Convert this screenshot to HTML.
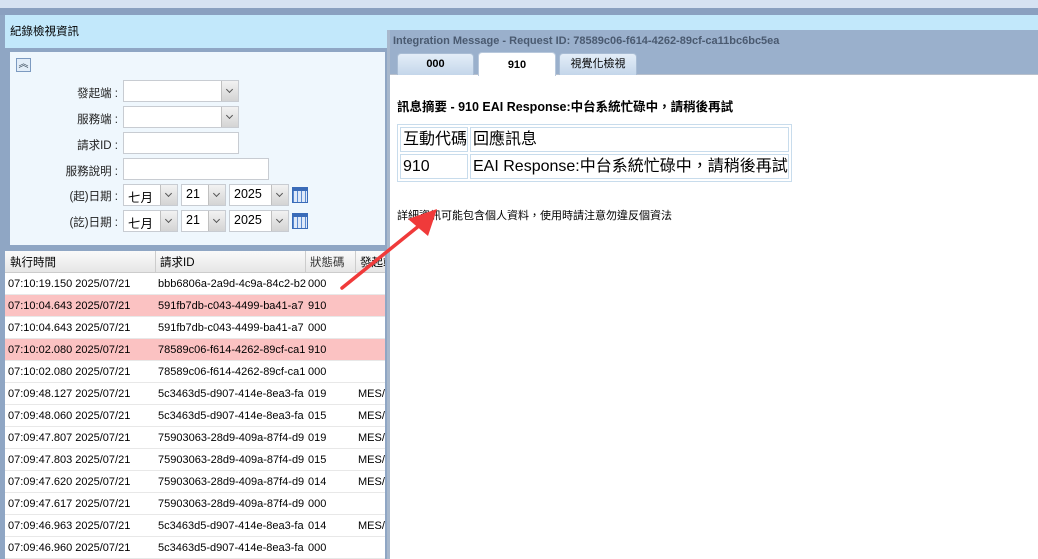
<!DOCTYPE html>
<html><head><meta charset="utf-8"><style>
*{margin:0;padding:0;box-sizing:border-box}
body{width:1038px;height:559px;overflow:hidden;position:relative;background:#8fa6c4;font-family:"Liberation Sans","Noto Sans CJK TC",sans-serif;font-size:12px;color:#000}
.a{position:absolute}
.lbl{position:absolute;text-align:right;width:110px;left:8px;font-size:11.5px;color:#222}
.inp{position:absolute;background:#fff;border:1px solid #c8ccd2;height:22px}
.sel .btn{position:absolute;right:0;top:0;width:17px;height:20px;background:linear-gradient(#f2f2f2,#d4d4d4);border-left:1px solid #c0c0c0}
.sel .btn:after{content:"";position:absolute;left:5px;top:6px;width:4px;height:4px;border-right:1.5px solid #555;border-bottom:1.5px solid #555;transform:rotate(45deg)}
.sel span{position:absolute;left:4px;top:2px;font-size:12.5px}
.cal{position:absolute;width:16px;height:16px;background:repeating-linear-gradient(90deg,#5a8ad0 0 1px,#dfe9f8 1px 4px),#dfe9f8;border:1px solid #3a6bb8;border-top:4px solid #3a6bb8}
.row{position:absolute;left:5px;width:380px;height:22px;border-bottom:1px solid #e8e8e8;background:#fff;font-size:11px}
.row.r{background:#fbc2c2}
.row div{position:absolute;top:5px;overflow:hidden;white-space:nowrap}
.row div:nth-child(2){width:148px}
.row div:nth-child(4){width:30px}
</style></head><body>
<div class="a" style="left:0;top:0;width:1038px;height:8px;background:#d6e2f2"></div>
<div class="a" style="left:0;top:8px;width:1038px;height:7px;background:#8aa0c0"></div>
<div class="a" style="left:5px;top:15px;width:1033px;height:33px;background:#c2e8fb"></div>
<div class="a" style="left:10px;top:23px;font-size:11.5px">紀錄檢視資訊</div>
<div class="a" style="left:10px;top:52px;width:375px;height:193px;background:#eff7fd"></div>
<div class="a" style="left:16px;top:58px;width:15px;height:14px;border:1px solid #7c9ac0;background:#e2edf8;font-size:10px;line-height:11px;text-align:center;color:#345">︽</div>
<div class="lbl" style="top:85px">發起端 :</div>
<div class="inp sel" style="left:123px;top:80px;width:116px"><div class="btn"></div></div>
<div class="lbl" style="top:111px">服務端 :</div>
<div class="inp sel" style="left:123px;top:106px;width:116px"><div class="btn"></div></div>
<div class="lbl" style="top:137px">請求ID :</div>
<div class="inp" style="left:123px;top:132px;width:116px"></div>
<div class="lbl" style="top:163px">服務說明 :</div>
<div class="inp" style="left:123px;top:158px;width:146px"></div>
<div class="lbl" style="top:188px">(起)日期 :</div>
<div class="inp sel" style="left:123px;top:184px;width:55px"><span>七月</span><div class="btn"></div></div>
<div class="inp sel" style="left:181px;top:184px;width:45px"><span>21</span><div class="btn"></div></div>
<div class="inp sel" style="left:229px;top:184px;width:60px"><span>2025</span><div class="btn"></div></div>
<div class="cal" style="left:292px;top:187px"></div>
<div class="lbl" style="top:214px">(訖)日期 :</div>
<div class="inp sel" style="left:123px;top:210px;width:55px"><span>七月</span><div class="btn"></div></div>
<div class="inp sel" style="left:181px;top:210px;width:45px"><span>21</span><div class="btn"></div></div>
<div class="inp sel" style="left:229px;top:210px;width:60px"><span>2025</span><div class="btn"></div></div>
<div class="cal" style="left:292px;top:213px"></div>
<div class="a" style="left:5px;top:251px;width:380px;height:22px;background:linear-gradient(#fafafa,#e6e6e6);border-bottom:1px solid #ccc"></div>
<div class="a" style="left:155px;top:251px;width:1px;height:22px;background:#ccc"></div>
<div class="a" style="left:305px;top:251px;width:1px;height:22px;background:#ccc"></div>
<div class="a" style="left:355px;top:251px;width:1px;height:22px;background:#ccc"></div>
<div class="a" style="left:10px;top:254px;font-size:11.5px">執行時間</div>
<div class="a" style="left:160px;top:254px;font-size:11.5px">請求ID</div>
<div class="a" style="left:310px;top:254px;color:#333;font-size:11.5px">狀態碼</div>
<div class="a" style="left:360px;top:254px;width:25px;overflow:hidden;white-space:nowrap;font-size:11.5px">發起端</div>
<div class="row" style="top:273px"><div style="left:3px">07:10:19.150 2025/07/21</div><div style="left:153px">bbb6806a-2a9d-4c9a-84c2-b2</div><div style="left:303px">000</div></div>
<div class="row r" style="top:295px"><div style="left:3px">07:10:04.643 2025/07/21</div><div style="left:153px">591fb7db-c043-4499-ba41-a7</div><div style="left:303px">910</div></div>
<div class="row" style="top:317px"><div style="left:3px">07:10:04.643 2025/07/21</div><div style="left:153px">591fb7db-c043-4499-ba41-a7</div><div style="left:303px">000</div></div>
<div class="row r" style="top:339px"><div style="left:3px">07:10:02.080 2025/07/21</div><div style="left:153px">78589c06-f614-4262-89cf-ca1</div><div style="left:303px">910</div></div>
<div class="row" style="top:361px"><div style="left:3px">07:10:02.080 2025/07/21</div><div style="left:153px">78589c06-f614-4262-89cf-ca1</div><div style="left:303px">000</div></div>
<div class="row" style="top:383px"><div style="left:3px">07:09:48.127 2025/07/21</div><div style="left:153px">5c3463d5-d907-414e-8ea3-fa</div><div style="left:303px">019</div><div style="left:353px">MES/</div></div>
<div class="row" style="top:405px"><div style="left:3px">07:09:48.060 2025/07/21</div><div style="left:153px">5c3463d5-d907-414e-8ea3-fa</div><div style="left:303px">015</div><div style="left:353px">MES/</div></div>
<div class="row" style="top:427px"><div style="left:3px">07:09:47.807 2025/07/21</div><div style="left:153px">75903063-28d9-409a-87f4-d9</div><div style="left:303px">019</div><div style="left:353px">MES/</div></div>
<div class="row" style="top:449px"><div style="left:3px">07:09:47.803 2025/07/21</div><div style="left:153px">75903063-28d9-409a-87f4-d9</div><div style="left:303px">015</div><div style="left:353px">MES/</div></div>
<div class="row" style="top:471px"><div style="left:3px">07:09:47.620 2025/07/21</div><div style="left:153px">75903063-28d9-409a-87f4-d9</div><div style="left:303px">014</div><div style="left:353px">MES/</div></div>
<div class="row" style="top:493px"><div style="left:3px">07:09:47.617 2025/07/21</div><div style="left:153px">75903063-28d9-409a-87f4-d9</div><div style="left:303px">000</div></div>
<div class="row" style="top:515px"><div style="left:3px">07:09:46.963 2025/07/21</div><div style="left:153px">5c3463d5-d907-414e-8ea3-fa</div><div style="left:303px">014</div><div style="left:353px">MES/</div></div>
<div class="row" style="top:537px"><div style="left:3px">07:09:46.960 2025/07/21</div><div style="left:153px">5c3463d5-d907-414e-8ea3-fa</div><div style="left:303px">000</div></div>
<!-- window -->
<div class="a" style="left:387px;top:30px;width:651px;height:529px;background:#fff;border-left:3px solid #a8b8cc"></div>
<div class="a" style="left:390px;top:30px;width:648px;height:45px;background:#9ab0cc;border-bottom:1px solid #b8c0cc"></div>
<div class="a" style="left:393px;top:35px;font-size:11px;font-weight:bold;color:#4a5a70">Integration Message - Request ID: 78589c06-f614-4262-89cf-ca11bc6bc5ea</div>
<div class="a" style="left:397px;top:53px;width:77px;height:22px;background:linear-gradient(#e4eef8,#c4d6ea);border:1px solid #a8bcd4;border-bottom:none;border-radius:4px 4px 0 0;text-align:center;line-height:21px;font-weight:bold;font-size:11px">000</div>
<div class="a" style="left:478px;top:52px;width:78px;height:24px;background:#fff;border:1px solid #b8c8dc;border-bottom:none;border-radius:4px 4px 0 0;text-align:center;line-height:24px;font-weight:bold;font-size:11px">910</div>
<div class="a" style="left:559px;top:53px;width:78px;height:22px;background:linear-gradient(#e4eef8,#c4d6ea);border:1px solid #a8bcd4;border-bottom:none;border-radius:4px 4px 0 0;text-align:center;line-height:21px;font-size:11px">視覺化檢視</div>
<div class="a" style="left:397px;top:96px;font-weight:bold;font-size:12.5px;white-space:nowrap">訊息摘要 - 910 EAI Response:中台系統忙碌中，請稍後再試</div>
<div class="a" style="left:397px;top:124px;width:395px;height:58px;border:1px solid #c8dcec;background:#fff"></div>
<div class="a" style="left:400px;top:127px;width:68px;height:25px;border:1px solid #c8dcec;font-size:16px;padding-left:2px;line-height:24px">互動代碼</div>
<div class="a" style="left:470px;top:127px;width:319px;height:25px;border:1px solid #c8dcec;font-size:16px;padding-left:2px;line-height:24px">回應訊息</div>
<div class="a" style="left:400px;top:154px;width:68px;height:25px;border:1px solid #c8dcec;font-size:16px;padding-left:2px;line-height:24px">910</div>
<div class="a" style="left:470px;top:154px;width:319px;height:25px;border:1px solid #c8dcec;font-size:16px;padding-left:2px;line-height:24px;white-space:nowrap">EAI Response:中台系統忙碌中，請稍後再試</div>
<div class="a" style="left:397px;top:207px;font-size:11px">詳細資訊可能包含個人資料，使用時請注意勿違反個資法</div>
<svg class="a" style="left:0;top:0" width="1038" height="559"><line x1="342" y1="288" x2="420" y2="225" stroke="#f03a3a" stroke-width="3.5" stroke-linecap="round"/><polygon points="437,209 408,219 428,236" fill="#f03a3a"/></svg>
</body></html>
